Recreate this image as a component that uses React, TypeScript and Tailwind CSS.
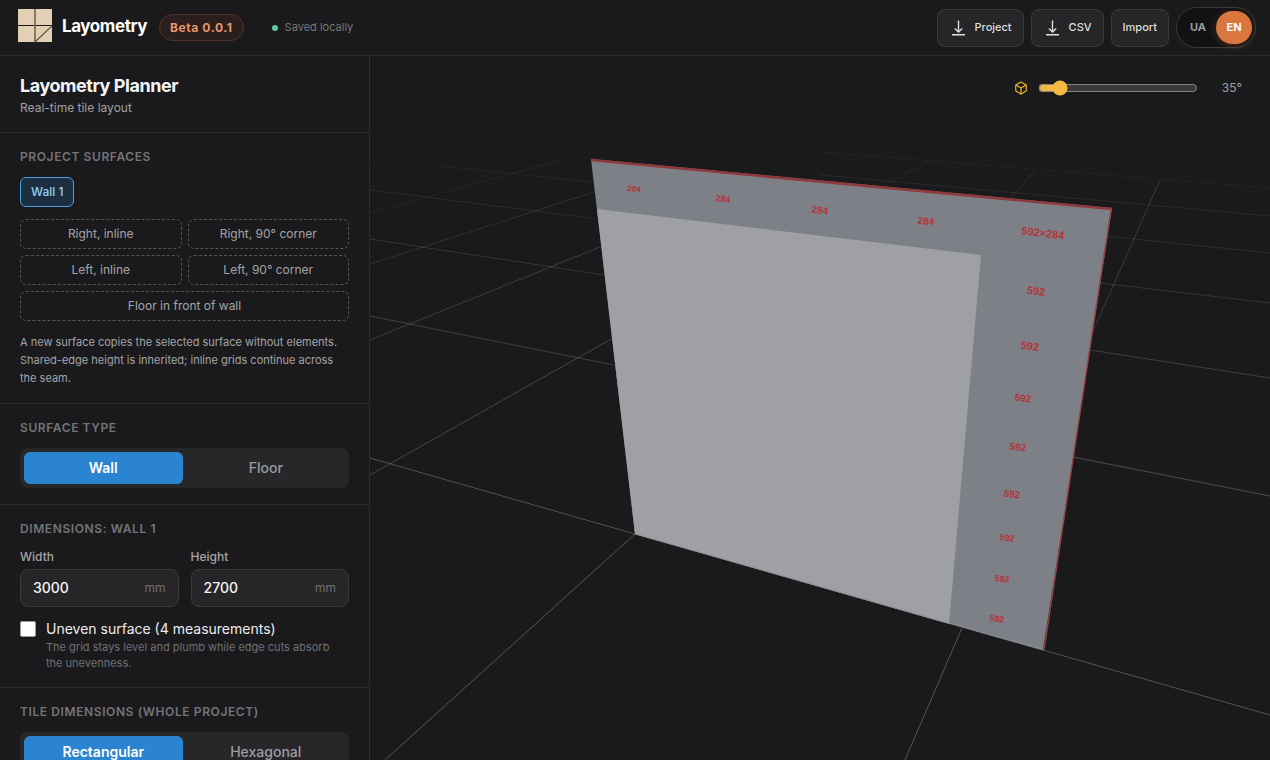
import { useState } from "react";
import type { ReactNode } from "react";
import { Box } from "lucide-react";

type Label = { x: number; y: number; size: number; text: string };

const NEW_SURFACES = ["Right, inline", "Right, 90° corner", "Left, inline", "Left, 90° corner"];

// Floor grid, nearest lines first: [x1, y1, x2, y2, opacity]
const GRID_LINES: number[][] = [
  [635, 534, 385, 760, 0.26],
  [370, 458, 635, 534, 0.24],
  [1043, 650, 1270, 715, 0.26],
  [962, 628, 905, 760, 0.26],
  [370, 475, 613, 338, 0.2],
  [370, 316, 614, 365, 0.17],
  [1073, 457, 1270, 496, 0.22],
  [370, 340, 600, 247, 0.15],
  [370, 239, 604, 275, 0.12],
  [1090, 350, 1270, 378, 0.16],
  [1160, 180, 1090, 338, 0.15],
  [370, 264, 594, 192, 0.1],
  [370, 190, 598, 219, 0.08],
  [1100, 283, 1270, 303, 0.12],
  [370, 213, 560, 160, 0.05],
  [440, 166, 592, 182, 0.05],
  [1105, 236, 1270, 253, 0.09],
  [820, 175, 1270, 216, 0.07],
  [820, 152, 1270, 188, 0.04],
  [1035, 171, 1010, 198, 0.09],
  [930, 161, 885, 185, 0.06],
  [370, 164, 440, 146, 0.02],
  [1040, 148, 1270, 164, 0.02],
];

const CUT_LABELS: Label[] = [
  { x: 634, y: 189, size: 8, text: "284" },
  { x: 723, y: 199, size: 9, text: "284" },
  { x: 820, y: 210, size: 10, text: "284" },
  { x: 926, y: 221, size: 10, text: "284" },
  { x: 1043, y: 233, size: 11, text: "592×284" },
  { x: 1036, y: 291, size: 11, text: "592" },
  { x: 1030, y: 346, size: 11, text: "592" },
  { x: 1023, y: 398, size: 10, text: "592" },
  { x: 1018, y: 447, size: 10, text: "592" },
  { x: 1012, y: 494, size: 10, text: "592" },
  { x: 1007, y: 538, size: 9, text: "592" },
  { x: 1002, y: 579, size: 9, text: "592" },
  { x: 997, y: 619, size: 9, text: "592" },
];

function Logo() {
  return (
    <svg viewBox="0 0 34 34" className="h-[34px] w-[34px]" aria-hidden="true">
      <rect width="34" height="33" fill="#e2d0b4" />
      <path d="M0 16.5H34" stroke="#1c1814" strokeWidth="1.2" />
      <path d="M17 0V33" stroke="#6e6354" strokeWidth="1.6" />
      <path d="M17 33L34 17" stroke="#5c5246" strokeWidth="1.2" />
    </svg>
  );
}

function DownloadIcon() {
  return (
    <svg
      viewBox="0 0 18 18"
      className="h-[18px] w-[18px]"
      fill="none"
      stroke="currentColor"
      strokeWidth="1.4"
      aria-hidden="true"
    >
      <path d="M9.5 1.5V13M5.8 9.5L9.5 13L13.2 9.5M3 15.8H16" />
    </svg>
  );
}

function HeaderButton({ children }: { children: ReactNode }) {
  return (
    <button className="flex h-[38px] items-center gap-2 rounded-lg border border-[#3a3a3c] bg-[#262628] px-[11px] text-[11px] font-medium text-[#dededf]">
      {children}
    </button>
  );
}

function Section({ title, children }: { title: string; children: ReactNode }) {
  return (
    <section className="border-b border-[#2b2b2d] px-5 py-4">
      <h2 className="mb-3 text-xs leading-4 font-semibold tracking-wider text-[#747478] uppercase">{title}</h2>
      {children}
    </section>
  );
}

function Segmented({ options }: { options: string[] }) {
  const [active, setActive] = useState(options[0]);
  return (
    <div className="grid grid-cols-2 gap-1 rounded-lg bg-[#27272a] p-1">
      {options.map((option) => (
        <button
          key={option}
          onClick={() => setActive(option)}
          className={
            option === active
              ? "h-8 rounded-md bg-[#2b84cf] text-sm font-semibold text-white"
              : "h-8 rounded-md text-sm font-medium text-[#9c9ca1]"
          }
        >
          {option}
        </button>
      ))}
    </div>
  );
}

function SizeField({ id, label, initial }: { id: string; label: string; initial: string }) {
  const [value, setValue] = useState(initial);
  return (
    <div className="min-w-0">
      <label htmlFor={id} className="mb-1 block text-xs leading-4 font-medium text-[#a4a4a8]">
        {label}
      </label>
      <div className="flex h-[38px] items-center rounded-lg border border-[#3a3a3c] bg-[#262628] px-3">
        <input
          id={id}
          value={value}
          onChange={(e) => setValue(e.target.value)}
          className="min-w-0 flex-1 bg-transparent text-sm font-medium text-[#f4f4f5] outline-none"
        />
        <span className="text-xs text-[#707074]">mm</span>
      </div>
    </div>
  );
}

function Scene() {
  return (
    <svg
      viewBox="370 56 900 704"
      preserveAspectRatio="xMidYMid slice"
      className="h-full w-full font-['Liberation_Sans',Arial,sans-serif]"
      role="img"
      aria-label="3D view of Wall 1"
    >
      {GRID_LINES.map(([x1, y1, x2, y2, opacity], i) => (
        <line key={i} x1={x1} y1={y1} x2={x2} y2={y2} stroke="#ffffff" strokeOpacity={opacity} />
      ))}
      <polygon points="591,159 1112,208 1043,650 635,534" fill="#7d8087" />
      <polygon points="597,209 981,255 949,624 635,534" fill="#9fa0a3" />
      <path d="M635 534L1043 650" stroke="#8c8d90" />
      <path d="M591 160L1112 209" stroke="#8e3a3c" strokeWidth="2.6" />
      <path d="M1111 209L1044 650" stroke="#9a4444" strokeWidth="1.4" />
      {CUT_LABELS.map((label) => (
        <text
          key={label.y}
          x={label.x}
          y={label.y}
          fontSize={label.size}
          fontWeight="700"
          fill="#b5343b"
          textAnchor="middle"
          dominantBaseline="central"
          transform={`rotate(7 ${label.x} ${label.y})`}
        >
          {label.text}
        </text>
      ))}
    </svg>
  );
}

export default function App() {
  const [lang, setLang] = useState("EN");
  const [angle, setAngle] = useState(35);
  const [uneven, setUneven] = useState(false);

  return (
    <div className="flex h-screen flex-col overflow-hidden bg-[#1a1a1c] font-['Inter',sans-serif] text-[#f4f4f5]">
      <header className="flex h-14 shrink-0 items-center justify-between border-b border-[#2b2b2d] pr-3.5 pl-[18px]">
        <div className="flex items-center">
          <a href="#" className="flex items-center gap-2.5 pb-1">
            <Logo />
            <span className="text-[17px] leading-6 font-bold tracking-tight text-white">Layometry</span>
          </a>
          <span className="ml-3 flex h-[27px] items-center rounded-full border border-[#50342a] bg-[#2a1f1c] px-2.5 text-xs font-bold tracking-wider text-[#e8956b]">
            Beta 0.0.1
          </span>
          <span className="ml-7 flex items-center gap-[7px] text-[11px] text-[#77777b]">
            <span className="h-1.5 w-1.5 rounded-full bg-[#5fc9a0]" />
            Saved locally
          </span>
        </div>
        <div className="flex items-center gap-[7px]">
          <HeaderButton>
            <DownloadIcon />
            Project
          </HeaderButton>
          <HeaderButton>
            <DownloadIcon />
            CSV
          </HeaderButton>
          <HeaderButton>Import</HeaderButton>
          <div className="flex rounded-full border border-[#3a3a3c] bg-[#121214] p-[3px]">
            {["UA", "EN"].map((code) => (
              <button
                key={code}
                onClick={() => setLang(code)}
                className={
                  code === lang
                    ? "h-[33px] w-9 rounded-full bg-[#d9773f] text-[11px] font-bold text-white shadow-[0_2px_8px_rgba(217,119,63,0.25)]"
                    : "h-[33px] w-9 rounded-full text-[11px] font-bold text-[#9c9ca1]"
                }
              >
                {code}
              </button>
            ))}
          </div>
        </div>
      </header>

      <div className="flex min-h-0 flex-1">
        <aside className="w-[370px] shrink-0 overflow-y-auto border-r border-[#2b2b2d] [scrollbar-width:none]">
          <div className="border-b border-[#2b2b2d] px-5 pt-5 pb-4">
            <h1 className="text-lg leading-5 font-bold tracking-tight">Layometry Planner</h1>
            <p className="mt-1 text-xs leading-4 text-[#a0a0a4]">Real-time tile layout</p>
          </div>

          <Section title="Project surfaces">
            <button className="h-[30px] rounded-md border border-[#4a9fdc] bg-[#1c2f40] px-2.5 text-xs font-medium text-[#93d0f5]">
              Wall 1
            </button>
            <div className="mt-3 grid grid-cols-2 gap-1.5">
              {NEW_SURFACES.map((name) => (
                <button
                  key={name}
                  className="h-[30px] rounded-md border border-dashed border-[#555558] text-xs text-[#a4a4a8]"
                >
                  {name}
                </button>
              ))}
              <button className="col-span-2 h-[30px] rounded-md border border-dashed border-[#555558] text-xs text-[#a4a4a8]">
                Floor in front of wall
              </button>
            </div>
            <p className="mt-3 text-[11px] leading-[18px] text-[#a4a4a8]">
              A new surface copies the selected surface without elements. Shared-edge height is inherited; inline
              grids continue across the seam.
            </p>
          </Section>

          <Section title="Surface type">
            <Segmented options={["Wall", "Floor"]} />
          </Section>

          <Section title="Dimensions: Wall 1">
            <div className="grid grid-cols-2 gap-3">
              <SizeField id="wall-width" label="Width" initial="3000" />
              <SizeField id="wall-height" label="Height" initial="2700" />
            </div>
            <div className="mt-3 flex items-start gap-2.5">
              <input
                id="uneven"
                type="checkbox"
                checked={uneven}
                onChange={(e) => setUneven(e.target.checked)}
                className="mt-0.5 h-4 w-4 shrink-0 appearance-none rounded-xs border border-[#9a9a9c] bg-white checked:bg-[#2b84cf]"
              />
              <div className="pr-3">
                <label htmlFor="uneven" className="block text-sm leading-5 text-[#ececee]">
                  Uneven surface (4 measurements)
                </label>
                <p className="text-[11px] leading-4 text-[#707074]">
                  The grid stays level and plumb while edge cuts absorb the unevenness.
                </p>
              </div>
            </div>
          </Section>

          <Section title="Tile dimensions (whole project)">
            <Segmented options={["Rectangular", "Hexagonal"]} />
          </Section>
        </aside>

        <main className="relative min-w-0 flex-1">
          <Scene />
          <div className="absolute top-5 right-7 flex h-6 items-center gap-2.5">
            <Box className="h-3.5 w-3.5 text-[#efb822]" />
            <input
              type="range"
              aria-label="Camera angle"
              min={30}
              max={80}
              value={angle}
              onChange={(e) => setAngle(Number(e.target.value))}
              className="w-40 accent-[#f5b942] [color-scheme:dark]"
            />
            <span className="w-[34px] text-right text-xs text-[#a0a0a4]">{angle}°</span>
          </div>
        </main>
      </div>
    </div>
  );
}
